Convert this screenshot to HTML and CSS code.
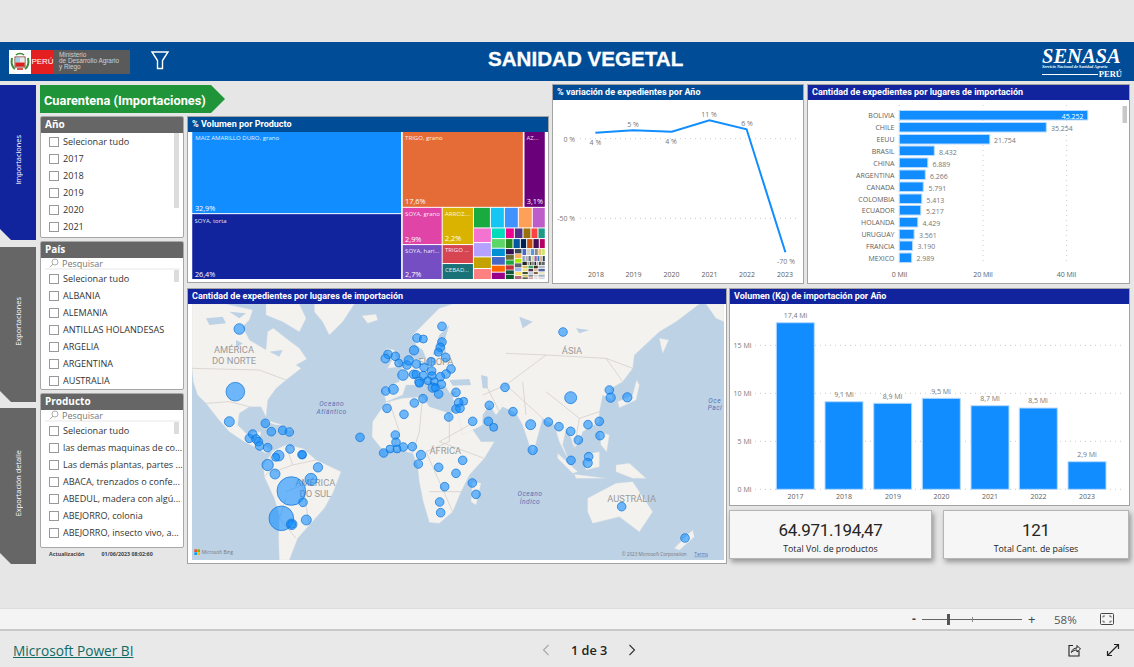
FILE: index.html
```html
<!DOCTYPE html>
<html lang="es">
<head>
<meta charset="utf-8">
<title>Sanidad Vegetal</title>
<link rel="stylesheet" href="styles.css">
</head>
<body>
<div class="page">
  <header class="banner">
    <div class="minlogo">
      <span class="shield"><svg viewBox="0 0 22 23" width="22" height="23"><rect x="6" y="7" width="10" height="10" fill="#fff" stroke="#7a3a2a" stroke-width="1"/><rect x="6.5" y="7.5" width="4.5" height="5" fill="#9fd0e8"/><rect x="11" y="7.5" width="4.5" height="5" fill="#e8e8e8"/><rect x="6.5" y="12.5" width="9" height="4" fill="#d8231f"/><path d="M3 8c-1 5 0 9 3 11M19 8c1 5 0 9-3 11" fill="none" stroke="#3d8b3a" stroke-width="2"/><path d="M7 5c2-2 6-2 8 0" fill="none" stroke="#3d8b3a" stroke-width="1.6"/><path d="M8 19h6" stroke="#d8231f" stroke-width="1.6"/></svg></span>
      <span class="peru">PERÚ</span>
      <span class="minname">Ministerio<br>de Desarrollo Agrario<br>y Riego</span>
    </div>
    <svg class="funnel" viewBox="0 0 20 20" width="20" height="20"><path d="M2 2H18L12.500 10.500V18.500H7.500V10.500Z" fill="none" stroke="#fff" stroke-width="1.400"/></svg>
    <h1 class="title">SANIDAD VEGETAL</h1>
    <div class="senasa">
      <div class="senasa-name">SENASA</div>
      <div class="senasa-sub">Servicio Nacional de Sanidad Agraria</div>
      <div class="senasa-foot"><span class="senasa-line"></span><span class="senasa-peru">PERÚ</span></div>
    </div>
  </header>

  <main class="report">
    <nav class="tabs">
      <a class="tab tab-blue"><span>Importaciones</span></a>
      <a class="tab tab-grey tab-second"><span>Exportaciones</span></a>
      <a class="tab tab-grey tab-third"><span>Exportación detalle</span></a>
    </nav>

    <aside class="filters">
      <div class="arrow">Cuarentena (Importaciones)</div>
      <section class="slicer slicer-year">
        <h3>Año</h3>
        <ul class="items">
          <li><i></i>Selecionar tudo</li><li><i></i>2017</li><li><i></i>2018</li><li><i></i>2019</li><li><i></i>2020</li><li><i></i>2021</li>
        </ul>
        <b class="scroll scroll-year"></b>
      </section>
      <section class="slicer slicer-country">
        <h3>País</h3>
        <div class="search"><svg viewBox="0 0 10 10" width="10" height="10"><circle cx="6" cy="4" r="3" fill="none" stroke="#999" stroke-width=".8"/><path d="M4 6.200L1 9" stroke="#999" stroke-width=".8"/></svg>Pesquisar</div>
        <ul class="items">
          <li><i></i>Selecionar tudo</li><li><i></i>ALBANIA</li><li><i></i>ALEMANIA</li><li><i></i>ANTILLAS HOLANDESAS</li><li><i></i>ARGELIA</li><li><i></i>ARGENTINA</li><li><i></i>AUSTRALIA</li>
        </ul>
        <b class="scroll scroll-search"></b>
      </section>
      <section class="slicer slicer-product">
        <h3>Producto</h3>
        <div class="search"><svg viewBox="0 0 10 10" width="10" height="10"><circle cx="6" cy="4" r="3" fill="none" stroke="#999" stroke-width=".8"/><path d="M4 6.200L1 9" stroke="#999" stroke-width=".8"/></svg>Pesquisar</div>
        <ul class="items">
          <li><i></i>Selecionar tudo</li><li><i></i>las demas maquinas de co...</li><li><i></i>Las demás plantas, partes ...</li><li><i></i>ABACA, trenzados o confe...</li><li><i></i>ABEDUL, madera con algú...</li><li><i></i>ABEJORRO, colonia</li><li><i></i>ABEJORRO, insecto vivo, a...</li>
        </ul>
        <b class="scroll scroll-search"></b>
      </section>
      <div class="updated"><span>Actualización</span><span>01/06/2023 08:02:60</span></div>
    </aside>

    <div class="visuals">
      <section class="card card-tree">
        <h2 class="head head-teal">% Volumen por Producto</h2>
        <div class="tree-body">
        <svg class="tree" viewBox="18 68 1060 442" width="353" height="147">
          <rect x="18" y="68" width="628" height="244" fill="#118dff"/>
          <rect x="18" y="315" width="628" height="195" fill="#12239e"/>
          <rect x="651" y="68" width="361" height="225" fill="#e66c37"/>
          <rect x="1017" y="68" width="61" height="225" fill="#6b007b"/>
          <rect x="651" y="296" width="117" height="109" fill="#e044a7"/>
          <rect x="651" y="408" width="117" height="102" fill="#744ec2"/>
          <rect x="771" y="296" width="91" height="109" fill="#d9b300"/>
          <rect x="771" y="408" width="91" height="54" fill="#d64550"/>
          <rect x="771" y="465" width="91" height="45" fill="#197278"/>
          <rect x="865" y="296" width="48" height="59" fill="#1aab40"/>
          <rect x="916" y="296" width="39" height="59" fill="#15c6f4"/>
          <rect x="958" y="296" width="39" height="59" fill="#4092ff"/>
          <rect x="1000" y="296" width="39" height="59" fill="#ffa058"/>
          <rect x="1042" y="296" width="36" height="59" fill="#be5dc9"/>
          <rect x="865" y="358" width="51" height="41" fill="#f472d0"/>
          <rect x="865" y="402" width="51" height="40" fill="#b5a1ff"/>
          <rect x="865" y="445" width="51" height="32" fill="#c4a200"/>
          <rect x="865" y="480" width="51" height="30" fill="#ff8080"/>
          <rect x="919" y="358" width="39" height="29" fill="#00dbbc"/>
          <rect x="919" y="390" width="39" height="26" fill="#5bd667"/>
          <rect x="919" y="419" width="39" height="22" fill="#0091d5"/>
          <rect x="919" y="444" width="39" height="23" fill="#4668c5"/>
          <rect x="919" y="470" width="39" height="18" fill="#ff6300"/>
          <rect x="919" y="491" width="39" height="19" fill="#99008a"/>
          <rect x="961" y="358" width="24" height="29" fill="#ec008c"/>
          <rect x="988" y="358" width="23" height="29" fill="#533285"/>
          <rect x="1014" y="358" width="21" height="29" fill="#99700a"/>
          <rect x="1038" y="358" width="18" height="29" fill="#ff4141"/>
          <rect x="1059" y="358" width="19" height="29" fill="#1f9a85"/>
          <rect x="961" y="390" width="20" height="27" fill="#25891c"/>
          <rect x="984" y="390" width="19" height="27" fill="#0057a2"/>
          <rect x="1006" y="390" width="16" height="27" fill="#002050"/>
          <rect x="1025" y="390" width="16" height="27" fill="#c94f0f"/>
          <rect x="1044" y="390" width="16" height="27" fill="#450f54"/>
          <rect x="1063" y="390" width="15" height="27" fill="#b60064"/>
          <rect x="961" y="420" width="24" height="16" fill="#34124f"/>
          <rect x="961" y="438" width="24" height="14" fill="#6a6a33"/>
          <rect x="961" y="454" width="24" height="13" fill="#1fa740"/>
          <rect x="961" y="469" width="24" height="13" fill="#c4313a"/>
          <rect x="961" y="484" width="24" height="12" fill="#0f5540"/>
          <rect x="961" y="498" width="24" height="12" fill="#0a5c2e"/>
          <rect x="988" y="420" width="20" height="13" fill="#3a4750"/>
          <rect x="988" y="435" width="20" height="12" fill="#ffb05c"/>
          <rect x="988" y="449" width="20" height="12" fill="#a8ec00"/>
          <rect x="988" y="463" width="20" height="12" fill="#5a6570"/>
          <rect x="988" y="477" width="20" height="10" fill="#9eb8f5"/>
          <rect x="988" y="489" width="20" height="10" fill="#ffe066"/>
          <rect x="988" y="501" width="20" height="9" fill="#b06a80"/>
          <rect x="1011" y="420" width="11" height="18" fill="#4668c5"/><rect x="1024" y="420" width="10" height="18" fill="#d8d0c0"/><rect x="1036" y="420" width="10" height="18" fill="#5b9bd5"/><rect x="1048" y="420" width="9" height="18" fill="#8a8a8a"/><rect x="1059" y="420" width="9" height="18" fill="#e8c070"/><rect x="1070" y="420" width="8" height="18" fill="#c8e860"/>
          <rect x="1011" y="441" width="7" height="15" fill="#8ea0c0"/><rect x="1020" y="441" width="7" height="15" fill="#b0b0b0"/><rect x="1029" y="441" width="7" height="15" fill="#607080"/><rect x="1038" y="441" width="7" height="15" fill="#d0d8a0"/><rect x="1047" y="441" width="7" height="15" fill="#a060a0"/><rect x="1056" y="441" width="6" height="15" fill="#3080c0"/><rect x="1064" y="441" width="6" height="15" fill="#e0b080"/><rect x="1072" y="441" width="6" height="15" fill="#204060"/>
          <rect x="1011" y="458" width="13" height="10" fill="#222"/><rect x="1026" y="458" width="5" height="10" fill="#999"/><rect x="1033" y="458" width="5" height="10" fill="#333"/><rect x="1040" y="458" width="5" height="10" fill="#777"/><rect x="1047" y="458" width="5" height="10" fill="#222"/><rect x="1054" y="458" width="5" height="10" fill="#aaa"/><rect x="1061" y="458" width="5" height="10" fill="#333"/><rect x="1068" y="458" width="10" height="10" fill="#666"/>
          <rect x="1011" y="470" width="16" height="8" fill="#d0c060"/><rect x="1029" y="470" width="14" height="8" fill="#40a060"/><rect x="1045" y="470" width="12" height="8" fill="#403020"/><rect x="1059" y="470" width="19" height="8" fill="#b0b8c0"/>
          <rect x="1011" y="480" width="16" height="7" fill="#e8e080"/><rect x="1029" y="480" width="14" height="7" fill="#503050"/><rect x="1045" y="480" width="12" height="7" fill="#e0c0a0"/><rect x="1059" y="480" width="19" height="7" fill="#5060a0"/>
          <rect x="1011" y="489" width="16" height="6" fill="#405030"/><rect x="1029" y="489" width="14" height="6" fill="#c0d0e0"/><rect x="1045" y="489" width="12" height="6" fill="#806040"/><rect x="1059" y="489" width="19" height="6" fill="#e8e8c0"/>
          <rect x="1011" y="497" width="16" height="6" fill="#c8c060"/><rect x="1029" y="497" width="14" height="6" fill="#808890"/><rect x="1045" y="497" width="12" height="6" fill="#d0d0d0"/><rect x="1059" y="497" width="19" height="6" fill="#a0b0c0"/>
          <rect x="1011" y="505" width="16" height="5" fill="#606040"/><rect x="1029" y="505" width="14" height="5" fill="#d8a0a0"/><rect x="1045" y="505" width="12" height="5" fill="#e0e0e0"/><rect x="1059" y="505" width="19" height="5" fill="#d0d8e0"/>
          <g class="tl">
            <text x="27" y="92">MAIZ AMARILLO DURO, grano</text>
            <text x="25" y="341">SOYA, torta</text>
            <text x="658" y="92">TRIGO, grano</text>
            <text x="1023" y="92">AZ...</text>
            <text x="658" y="320">SOYA, grano</text>
            <text x="778" y="320">ARROZ,...</text>
            <text x="658" y="433">SOYA, hari...</text>
            <text x="778" y="430">TRIGO ...</text>
            <text x="778" y="490">CEBAD...</text>
          </g>
          <g class="tp">
            <text x="26" y="306">32,9%</text>
            <text x="26" y="504">26,4%</text>
            <text x="658" y="285">17,6%</text>
            <text x="1024" y="285">3,1%</text>
            <text x="658" y="399">2,9%</text>
            <text x="778" y="396">2,2%</text>
            <text x="658" y="504">2,7%</text>
          </g>
        </svg>
        </div>
      </section>

      <section class="card card-line">
        <h2 class="head head-teal">% variación de expedientes por Año</h2>
        <svg class="fill" viewBox="553 100 250 184" width="250" height="184">
          <path class="grid" d="M580 138.700H800M580 218.300H800"/>
          <polyline points="595.400,132.700 633,130.300 671.800,131.700 709.400,120.300 746.600,129.300 785.400,252.300" fill="none" stroke="#118dff" stroke-width="2"/>
          <g class="ax ax-mid">
            <text x="595.400" y="145">4 %</text><text x="633" y="127">5 %</text><text x="671" y="144">4 %</text><text x="709" y="116.500">11 %</text><text x="747" y="126">6 %</text><text x="786" y="263.500">-70 %</text>
          </g>
          <g class="ax ax-end"><text x="575" y="141.700">0 %</text><text x="575" y="221.300">-50 %</text></g>
          <g class="ax ax-mid ax-dark"><text x="596" y="276.500">2018</text><text x="633.500" y="276.500">2019</text><text x="671.500" y="276.500">2020</text><text x="709.500" y="276.500">2021</text><text x="747" y="276.500">2022</text><text x="785" y="276.500">2023</text></g>
        </svg>
      </section>

      <section class="card card-bars">
        <h2 class="head head-navy">Cantidad de expedientes por lugares de importación</h2>
        <svg class="fill" viewBox="808 100 321 184" width="321" height="184">
          <path class="grid" d="M899.300 105V265M983 105V265M1066.600 105V265"/>
          <g class="hb">
            <rect x="899.300" y="110.500" width="188.500" height="9.500"/><rect x="899.300" y="122.500" width="147" height="9.500"/><rect x="899.300" y="134.500" width="90.500" height="9.500"/><rect x="899.300" y="146" width="35" height="9.500"/><rect x="899.300" y="158" width="28.500" height="9.500"/><rect x="899.300" y="170" width="26" height="9.500"/><rect x="899.300" y="182" width="24" height="9.500"/><rect x="899.300" y="194" width="22.500" height="9.500"/><rect x="899.300" y="205.500" width="21.500" height="9.500"/><rect x="899.300" y="217.500" width="18.500" height="9.500"/><rect x="899.300" y="229.500" width="14.800" height="9.500"/><rect x="899.300" y="241" width="13.300" height="9.500"/><rect x="899.300" y="253" width="12.400" height="9.500"/>
          </g>
          <g class="ax ax-end ax-dark">
            <text x="894.500" y="118">BOLIVIA</text><text x="894.500" y="130">CHILE</text><text x="894.500" y="142">EEUU</text><text x="894.500" y="153.700">BRASIL</text><text x="894.500" y="165.700">CHINA</text><text x="894.500" y="177.700">ARGENTINA</text><text x="894.500" y="189.700">CANADA</text><text x="894.500" y="201.700">COLOMBIA</text><text x="894.500" y="213.300">ECUADOR</text><text x="894.500" y="225.300">HOLANDA</text><text x="894.500" y="237">URUGUAY</text><text x="894.500" y="248.700">FRANCIA</text><text x="894.500" y="260.700">MEXICO</text>
          </g>
          <text class="ax ax-end ax-white" x="1083.500" y="119">45.252</text>
          <g class="ax">
            <text x="1051" y="130.500">35.254</text><text x="994" y="142.500">21.754</text><text x="939" y="154.500">8.432</text><text x="932.500" y="166.500">6.889</text><text x="930" y="178.500">6.266</text><text x="928.500" y="190.500">5.791</text><text x="926.500" y="202.500">5.413</text><text x="926" y="214">5.217</text><text x="922.500" y="226">4.429</text><text x="919" y="238">3.561</text><text x="917.500" y="249">3.190</text><text x="916.500" y="261">2.989</text>
          </g>
          <g class="ax ax-mid ax-dark"><text x="899.500" y="276.500">0 Mil</text><text x="983" y="276.500">20 Mil</text><text x="1066.500" y="276.500">40 Mil</text></g>
          <rect x="1122.500" y="106" width="4.500" height="17" fill="#c8c8c8"/>
        </svg>
      </section>

      <section class="card card-map">
        <h2 class="head head-navy">Cantidad de expedientes por lugares de importación</h2>
        <div class="map-body">
        <svg class="map" viewBox="18 57 1596 768" width="532" height="256">
          <g class="land">
            <path d="M18 57L120 57 200 75 190 105 170 125 190 165 240 195 245 140 262 130 300 160 340 190 362 222 330 240 345 250 300 285 270 310 245 345 240 395 225 365 190 365 160 385 155 420 185 450 205 440 225 440 220 465 245 490 262 497 240 505 205 485 175 470 130 440 95 400 60 355 35 330 22 290 18 250Z"/>
            <path d="M240 57L340 57 360 100 340 140 290 110 240 90Z"/>
            <path d="M385 57L505 57 470 110 430 150 410 110 385 80Z"/>
            <path d="M528 92L570 88 575 105 545 115Z"/>
            <path d="M240 405L290 420 270 420 245 412ZM298 428L325 432 305 438Z"/>
            <path d="M262 497L300 480 350 490 390 525 465 560 440 625 415 670 370 720 335 760 310 825 280 825 278 760 280 690 265 640 235 575 232 540Z"/>
            <path d="M600 352L650 340 710 335 730 365 790 385 830 370 850 420 885 470 925 470 895 520 850 570 825 620 800 680 760 715 730 712 712 650 700 590 695 540 680 505 640 495 590 495 558 455 560 410Z"/>
            <path d="M860 590L885 595 870 660 855 650Z"/>
            <path d="M600 190L625 195 640 245 605 250 618 225ZM590 210L608 212 605 232 588 230Z"/>
            <path d="M680 150L760 70 800 57 1540 57 1470 110 1420 140 1345 210 1340 250 1310 290 1275 310 1280 345 1250 330 1240 380 1240 410 1190 440 1180 470 1165 490 1155 460 1140 430 1130 480 1150 530 1120 470 1105 420 1070 400 1040 510 1010 420 990 385 950 365 930 390 910 360 890 390 890 420 830 450 815 380 800 340 810 320 760 330 745 290 760 320 735 325 700 280 720 340 695 300 660 300 650 330 600 350 590 310 640 290 640 260 670 225 720 220 710 195 690 180Z"/>
            <path d="M1560 57L1614 57 1614 110 1590 100Z"/>
            <path d="M1420 160L1448 165 1430 205Z"/>
            <path d="M1295 350L1340 330 1352 285 1360 300 1350 345 1300 368Z"/>
            <path d="M1115 505L1175 560 1160 565 1115 520ZM1195 510L1240 500 1240 545 1200 555ZM1165 568L1260 580 1170 580ZM1240 440L1270 450 1262 500 1245 480ZM1290 540L1330 535 1380 580 1340 580 1290 560Z"/>
            <path d="M1205 640L1290 595 1340 590 1400 680 1360 740 1300 695 1220 715 1205 680Z"/>
            <path d="M1465 790L1520 735 1525 755 1480 795Z"/>
          </g>
          <path class="water" d="M740 210L760 150 790 120 775 170 780 205ZM790 285L850 282 855 300 800 302ZM885 270L905 275 905 310 890 310ZM700 280L780 305 800 340 700 330ZM60 100L110 95 120 115 70 120ZM130 80L180 85 160 100ZM250 200L290 195 280 215ZM150 165L170 175 150 190ZM1000 95L1040 110 1010 130ZM1170 130L1210 135 1180 145Z"/>
          <path class="borders" d="M18 250L220 255 300 285M60 355L130 350 190 365M245 490L262 545 235 575M300 480L320 540 265 560M320 540L390 525M300 620L350 600 370 720M300 640L280 700 330 760M610 350L640 440 620 495M710 335L700 440 680 505M790 385L790 470 720 500M850 420L760 470 895 520M720 500L800 680M730 620L825 620M890 330L960 300 1080 210 1260 220 1340 250M960 300L1070 400M1080 320L1180 400 1240 380M1180 400L1165 490M1260 220L1310 290M960 205L1080 210M900 300L940 380M1010 290L1020 390"/>
          <g class="cont">
            <text x="144" y="205">AMÉRICA</text><text x="144" y="238">DO NORTE</text>
            <text x="388" y="602">AMÉRICA</text><text x="388" y="635">DO SUL</text>
            <text x="750" y="240">EUROPA</text><text x="778" y="507">ÁFRICA</text><text x="1158" y="208">ÁSIA</text><text x="1337" y="651">AUSTRÁLIA</text>
          </g>
          <g class="ocean">
            <text x="437" y="364">Oceano</text><text x="437" y="388">Atlântico</text>
            <text x="1032" y="634">Oceano</text><text x="1032" y="656">Índico</text>
            <text x="1567" y="355" class="ocean-cut">Oce</text><text x="1565" y="376" class="ocean-cut">Pací</text>
          </g>
          <g class="dots">
            <circle cx="160" cy="132" r="16"/><circle cx="148" cy="320" r="28"/><circle cx="130" cy="410" r="15"/><circle cx="238" cy="415" r="13"/><circle cx="256" cy="440" r="13"/><circle cx="290" cy="436" r="13"/><circle cx="310" cy="441" r="13"/><circle cx="190" cy="460" r="13"/><circle cx="200" cy="447" r="13"/><circle cx="210" cy="462" r="13"/><circle cx="217" cy="470" r="13"/><circle cx="221" cy="483" r="13"/><circle cx="245" cy="488" r="13"/><circle cx="312" cy="492" r="13"/><circle cx="278" cy="512" r="16"/><circle cx="269" cy="517" r="12"/><circle cx="348" cy="509" r="13"/><circle cx="349" cy="509" r="12"/><circle cx="245" cy="540" r="17"/><circle cx="267" cy="567" r="15"/><circle cx="396" cy="547" r="14"/><circle cx="375" cy="583" r="18"/><circle cx="316" cy="618" r="43"/><circle cx="351" cy="652" r="13"/><circle cx="286" cy="700" r="37"/><circle cx="317" cy="718" r="16"/><circle cx="317" cy="718" r="12"/><circle cx="361" cy="705" r="15"/><circle cx="522" cy="457" r="13"/>
            <circle cx="768" cy="124" r="13"/><circle cx="693" cy="159" r="13"/><circle cx="712" cy="162" r="12"/><circle cx="768" cy="171" r="13"/><circle cx="763" cy="187" r="13"/><circle cx="757" cy="202" r="12"/><circle cx="779" cy="217" r="13"/><circle cx="684" cy="196" r="14"/><circle cx="606" cy="208" r="13"/><circle cx="598" cy="221" r="13"/><circle cx="628" cy="214" r="13"/><circle cx="638" cy="234" r="12"/><circle cx="663" cy="240" r="13"/><circle cx="668" cy="226" r="14"/><circle cx="691" cy="237" r="13"/><circle cx="735" cy="230" r="13"/><circle cx="714" cy="247" r="13"/><circle cx="737" cy="258" r="13"/><circle cx="795" cy="252" r="13"/><circle cx="780" cy="267" r="13"/><circle cx="763" cy="275" r="13"/><circle cx="651" cy="270" r="16"/><circle cx="683" cy="268" r="13"/><circle cx="690" cy="268" r="12"/><circle cx="712" cy="272" r="13"/><circle cx="738" cy="272" r="12"/><circle cx="700" cy="290" r="14"/><circle cx="700" cy="295" r="12"/><circle cx="726" cy="287" r="12"/><circle cx="745" cy="290" r="12"/><circle cx="766" cy="298" r="13"/><circle cx="740" cy="308" r="14"/><circle cx="748" cy="308" r="12"/><circle cx="758" cy="327" r="13"/><circle cx="810" cy="322" r="13"/><circle cx="711" cy="341" r="13"/><circle cx="685" cy="354" r="13"/><circle cx="622" cy="313" r="15"/><circle cx="599" cy="318" r="13"/><circle cx="603" cy="370" r="13"/><circle cx="654" cy="388" r="13"/><circle cx="788" cy="396" r="13"/><circle cx="810" cy="372" r="13"/><circle cx="628" cy="450" r="13"/><circle cx="630" cy="472" r="13"/><circle cx="652" cy="486" r="13"/><circle cx="633" cy="492" r="12"/><circle cx="612" cy="492" r="12"/><circle cx="593" cy="504" r="13"/><circle cx="679" cy="485" r="13"/><circle cx="705" cy="510" r="14"/><circle cx="697" cy="537" r="13"/><circle cx="758" cy="547" r="13"/><circle cx="810" cy="565" r="13"/><circle cx="776" cy="605" r="13"/><circle cx="761" cy="651" r="13"/><circle cx="764" cy="683" r="13"/>
            <circle cx="1131" cy="141" r="13"/><circle cx="957" cy="307" r="13"/><circle cx="833" cy="349" r="12"/><circle cx="818" cy="353" r="13"/><circle cx="822" cy="370" r="13"/><circle cx="910" cy="361" r="13"/><circle cx="981" cy="380" r="13"/><circle cx="1154" cy="338" r="18"/><circle cx="1270" cy="315" r="13"/><circle cx="1274" cy="338" r="14"/><circle cx="1324" cy="337" r="14"/><circle cx="860" cy="409" r="13"/><circle cx="907" cy="409" r="13"/><circle cx="923" cy="427" r="12"/><circle cx="1034" cy="419" r="15"/><circle cx="1087" cy="411" r="13"/><circle cx="1119" cy="425" r="13"/><circle cx="1154" cy="439" r="13"/><circle cx="1206" cy="419" r="13"/><circle cx="1240" cy="409" r="13"/><circle cx="1242" cy="452" r="13"/><circle cx="1177" cy="465" r="13"/><circle cx="1040" cy="495" r="14"/><circle cx="1155" cy="526" r="13"/><circle cx="1208" cy="515" r="13"/><circle cx="1205" cy="534" r="14"/><circle cx="830" cy="526" r="13"/><circle cx="859" cy="594" r="13"/><circle cx="870" cy="628" r="13"/><circle cx="1307" cy="665" r="13"/><circle cx="1497" cy="759" r="13"/>
          </g>
          <rect x="25" y="793" width="8" height="8" fill="#f25022"/><rect x="34" y="793" width="8" height="8" fill="#7fba00"/><rect x="25" y="802" width="8" height="8" fill="#00a4ef"/><rect x="34" y="802" width="8" height="8" fill="#ffb900"/>
          <text class="bing" x="47" y="806">Microsoft Bing</text>
          <text class="bing" x="1307" y="812">© 2023 Microsoft Corporation</text>
          <text class="terms" x="1525" y="812">Terms</text>
        </svg>
        </div>
      </section>

      <section class="card card-vol">
        <h2 class="head head-navy">Volumen (Kg) de importación por Año</h2>
        <svg class="fill" viewBox="730 304 399 201" width="399" height="201">
          <path class="grid" d="M755 345.300H1125M755 393.300H1125M755 441.300H1125M755 489.300H1125"/>
          <g class="vb">
            <rect x="776.300" y="322.700" width="38" height="166.600"/><rect x="825" y="401.700" width="38" height="87.600"/><rect x="873.700" y="403.300" width="38" height="86"/><rect x="922.300" y="398.300" width="38" height="91"/><rect x="971" y="405.700" width="38" height="83.600"/><rect x="1019.300" y="408" width="38" height="81.300"/><rect x="1068" y="461.700" width="38" height="27.600"/>
          </g>
          <g class="ax ax-mid">
            <text x="795.500" y="318">17,4 Mi</text><text x="844" y="397">9,1 Mi</text><text x="892.500" y="399">8,9 Mi</text><text x="941" y="394">9,5 Mi</text><text x="990" y="401">8,7 Mi</text><text x="1038" y="403">8,5 Mi</text><text x="1087" y="457">2,9 Mi</text>
          </g>
          <g class="ax ax-end"><text x="751.500" y="348">15 Mi</text><text x="751.500" y="396">10 Mi</text><text x="751.500" y="444">5 Mi</text><text x="751.500" y="492">0 Mi</text></g>
          <g class="ax ax-mid ax-dark"><text x="795.500" y="499">2017</text><text x="844" y="499">2018</text><text x="893" y="499">2019</text><text x="941.500" y="499">2020</text><text x="990" y="499">2021</text><text x="1038.500" y="499">2022</text><text x="1087" y="499">2023</text></g>
        </svg>
      </section>

      <div class="kpis">
        <div class="kpi kpi-wide"><strong>64.971.194,47</strong><span>Total Vol. de productos</span></div>
        <div class="kpi kpi-narrow"><strong>121</strong><span>Total Cant. de países</span></div>
      </div>
    </div>
  </main>

  <div class="zoombar">
    <span class="zm">-</span>
    <span class="slider"><b class="thumb"></b><b class="tick"></b></span>
    <span class="zm zm-plus">+</span>
    <span class="pct">58%</span>
    <svg class="fit" viewBox="0 0 14 12" width="14" height="12"><rect x=".5" y=".5" width="13" height="11" rx="1" fill="none" stroke="#444"/><path d="M3 4.500V3H5M9 3H11V4.500M11 7.500V9H9M5 9H3V7.500" fill="none" stroke="#444" stroke-width=".8"/></svg>
  </div>

  <footer class="footer">
    <a class="brand">Microsoft Power BI</a>
    <div class="pager">
      <svg viewBox="0 0 8 12" width="8" height="12"><path d="M6.500 1L1.500 6 6.500 11" fill="none" stroke="#a8a8a8" stroke-width="1.100"/></svg>
      <span>1 de 3</span>
      <svg viewBox="0 0 8 12" width="8" height="12"><path d="M1.500 1L6.500 6 1.500 11" fill="none" stroke="#333" stroke-width="1.100"/></svg>
    </div>
    <div class="actions">
      <svg viewBox="0 0 14 14" width="14" height="14"><path d="M6 2.500H2V13H12V8" fill="none" stroke="#222" stroke-width="1.100"/><path d="M4.500 9.500C5 6.500 7 5 10 5V2.500L13.500 6 10 9V7C8 7 6 7.500 4.500 9.500Z" fill="none" stroke="#222" stroke-width="1"/></svg>
      <svg viewBox="0 0 14 14" width="14" height="14"><path d="M1.500 8V12.500H6M12.500 6V1.500H8M1.500 12.500L12.500 1.500" fill="none" stroke="#222" stroke-width="1.200"/></svg>
    </div>
  </footer>
</div>
</body>
</html>
```
FILE: styles.css
```css
* { box-sizing: border-box; }
html, body { margin: 0; padding: 0; }
body { background: #e6e6e6; font-family: "Open Sans", "Noto Sans", sans-serif; overflow: hidden; }
.page { width: 1134px; height: 667px; padding-top: 42px; display: flex; flex-direction: column; }

/* banner */
.banner { height: 39px; background: #004c97; display: flex; align-items: center; flex: none; }
.minlogo { margin-left: 9px; width: 121px; height: 24px; display: flex; background: #5a5a5a; flex: none; }
.shield { width: 22px; background: #fff; display: flex; align-items: center; }
.peru { width: 23px; background: #e3201f; color: #fff; font: 8px/24px "Liberation Sans", sans-serif; text-align: center; }
.minname { padding: 2px 0 0 5px; color: #d0d0d0; font: 6.400px/6.400px "Liberation Sans", sans-serif; white-space: nowrap; }
.funnel { margin-left: 20px; margin-top: -3px; flex: none; }
.title { margin: -5px 0 0 318px; width: 198px; color: #fff; font: bold 20.600px/1 "Liberation Sans", Arial, sans-serif; -webkit-text-stroke: .3px #fff; white-space: nowrap; }
.senasa { margin-left: 356px; width: 80px; color: #fff; flex: none; padding-top: 5px; }
.senasa-name { font: italic bold 20.500px/15px "Liberation Serif", serif; white-space: nowrap; }
.senasa-sub { font: italic bold 4.200px/6px "Liberation Serif", serif; white-space: nowrap; }
.senasa-foot { display: flex; align-items: center; gap: 1px; }
.senasa-line { width: 57px; height: 1.500px; background: #fff; }
.senasa-peru { font: bold 8.500px/9px "Liberation Serif", serif; }

/* report */
.report { height: 527px; display: flex; flex: none; }
.tabs { width: 36px; flex: none; display: flex; flex-direction: column; padding-top: 4px; }
.tab { width: 36px; color: #fff; display: flex; align-items: center; justify-content: center; clip-path: polygon(0 0, 100% 0, 100% 100%, 11px 100%, 0 calc(100% - 11px)); font-size: 7.400px; }
.tab span { writing-mode: vertical-rl; transform: rotate(180deg); white-space: nowrap; }
.tab-blue { background: #12239e; height: 155px; }
.tab-blue span { margin-bottom: 5px; }
.tab-grey { background: #666; }
.tab-second { height: 155px; margin-top: 7px; }
.tab-second span { margin-bottom: 7px; }
.tab-third { height: 156px; margin-top: 6px; }
.tab-third span { margin-bottom: 5px; }

.filters { width: 144px; margin-left: 4px; margin-right: 3px; flex: none; padding-top: 4px; display: flex; flex-direction: column; }
.arrow { height: 28px; width: 185px; background: #1f9438; color: #fff; font-family: Roboto, sans-serif; font-weight: 700; font-size: 12.800px; line-height: 32px; padding-left: 4px; white-space: nowrap; clip-path: polygon(0 0, 171px 0, 100% 50%, 171px 100%, 0 100%); flex: none; }
.slicer { position: relative; background: #fff; border: 1px solid #a8a8a8; border-radius: 2px; overflow: hidden; flex: none; }
.slicer h3 { margin: 0; height: 16px; background: #666; color: #fff; font-size: 10px; font-weight: 700; line-height: 15px; padding-left: 4px; }
.slicer-year { height: 122px; margin-top: 3px; }
.slicer-country { height: 149px; margin-top: 3px; }
.slicer-product { height: 155px; margin-top: 3px; }
.search { height: 12px; margin: 0 3px 0 4px; border-bottom: 2px solid #f3f3f3; display: flex; align-items: center; gap: 3px; padding-left: 4px; color: #777; font-size: 9px; line-height: 11px; white-space: nowrap; }
.items { list-style: none; margin: 0; padding: 0; }
.items li { height: 17px; line-height: 17px; padding-left: 8px; font-size: 9.100px; color: #333; display: flex; align-items: center; white-space: nowrap; overflow: hidden; width: 142px; }
.items i { width: 10px; height: 10px; border: 1px solid #999; background: #fff; margin-right: 4px; flex: none; }
.scroll { position: absolute; right: 4px; width: 5px; background: #dcdcdc; }
.scroll-year { top: 16px; height: 75px; }
.scroll-search { top: 28px; height: 12px; }
.updated { margin-top: 2px; padding-left: 9px; display: flex; gap: 17px; font-size: 5.300px; font-weight: 700; color: #444; line-height: 8px; white-space: nowrap; }

/* grid of visuals */
.visuals { display: grid; grid-template-columns: 362px 3px 175px 2px 75px 3px 323px; grid-template-rows: 32px 168px 4px 218px 4px 49px 5px; margin-top: 3px; flex: none; align-content: start; height: 480px; }
.card { background: #fff; border: 1px solid #a3a3a3; overflow: hidden; min-width: 0; }
.card-tree { grid-column: 1; grid-row: 2; margin-bottom: 1px; }
.card-line { grid-column: 3 / 6; grid-row: 1 / 3; }
.card-bars { grid-column: 7; grid-row: 1 / 3; }
.card-map { grid-column: 1 / 4; grid-row: 4 / 8; }
.card-vol { grid-column: 5 / 8; grid-row: 4; }
.kpis { grid-column: 5 / 8; grid-row: 6; display: flex; justify-content: space-between; padding-right: 1px; }
.head { margin: 0; height: 15px; color: #fff; font-family: Roboto, sans-serif; font-weight: 700; font-size: 9px; line-height: 14px; padding-left: 4px; white-space: nowrap; }
.head-teal { background: #004c97; }
.head-navy { background: #12239e; }
.fill { display: block; }
.tree-body { padding: 0 4px; }
.tree { display: block; }
.map-body { padding-left: 4px; }
.map { display: block; background: #bed2e6; }

.tl text { font: 18.200px "Open Sans", sans-serif; fill: #fff; fill-opacity: .9; }
.tp text { font: 22px "Open Sans", sans-serif; fill: #fff; }

.grid { stroke: #c9c9c9; stroke-width: 1; stroke-dasharray: 1 4; fill: none; }
.ax { font: 7px "Open Sans", sans-serif; fill: #777; }
.ax text { fill: #777; }
.ax-mid text { text-anchor: middle; }
.ax-end, .ax-end text { text-anchor: end; }
.ax-dark text { fill: #605e5c; }
.ax-white { fill: #fff; }
.hb rect, .vb rect { fill: #118dff; stroke: #b7dbff; stroke-width: 1; }

.land path { fill: #f4f2ef; stroke: #d8dde0; stroke-width: 1; }
.water { fill: #bed2e6; }
.borders { fill: none; stroke: #cdc9c4; stroke-width: 2; }
.cont text { font: 28px Roboto, sans-serif; fill: #9a9a9a; text-anchor: middle; }
.ocean text { font: italic 20px Roboto, sans-serif; fill: #5672b5; text-anchor: middle; letter-spacing: 1.500px; }
.ocean .ocean-cut { text-anchor: start; }
.dots circle { fill: #118dff; fill-opacity: .6; stroke: #0c6fd2; stroke-width: 2; }
.bing { font: 14px "Open Sans", sans-serif; fill: #777; }
.terms { font: 14px "Open Sans", sans-serif; fill: #5672b5; text-decoration: underline; }

.kpi { height: 49px; background: #f6f6f6; border: 1px solid #b5b5b5; box-shadow: 2px 3px 5px rgba(0,0,0,.35); display: flex; flex-direction: column; align-items: center; color: #252423; }
.kpi-wide { width: 203px; }
.kpi-narrow { width: 186px; }
.kpi strong { font-family: Roboto, sans-serif; font-weight: 400; font-size: 17px; line-height: 20px; letter-spacing: -.3px; margin-top: 9px; }
.kpi span { font-size: 8.800px; line-height: 13px; margin-top: 3px; }

/* zoom bar + footer */
.zoombar { height: 23px; background: #f4f4f4; border-top: 1px solid #dedede; border-bottom: 2px solid #c9c9c9; display: flex; align-items: center; flex: none; padding-left: 912px; color: #444; }
.zm { width: 10px; font: 700 12px/1 "Open Sans", sans-serif; flex: none; text-align: left; }
.zm-plus { width: 14px; margin-left: 6px; font-weight: 400; font-size: 13px; }
.slider { position: relative; width: 100px; height: 1px; background: #666; flex: none; }
.thumb { position: absolute; left: 25px; top: -5px; width: 3px; height: 11px; background: #555; }
.tick { position: absolute; left: 50px; top: -2px; width: 1px; height: 5px; background: #888; }
.pct { width: 24px; margin-left: 12px; font-size: 11.500px; color: #555; flex: none; }
.fit { margin-left: 22px; flex: none; }

.footer { height: 37px; background: #e9e9e9; display: flex; align-items: center; flex: none; padding-left: 13px; }
.brand { width: 120px; color: #0f6b66; font-size: 13.700px; text-decoration: underline; white-space: nowrap; flex: none; margin-top: 2px; }
.pager { margin-left: 409px; display: flex; align-items: center; gap: 21px; font-size: 12.700px; font-weight: 600; color: #222; flex: none; }
.actions { margin-left: 431px; display: flex; gap: 25px; flex: none; }
```
